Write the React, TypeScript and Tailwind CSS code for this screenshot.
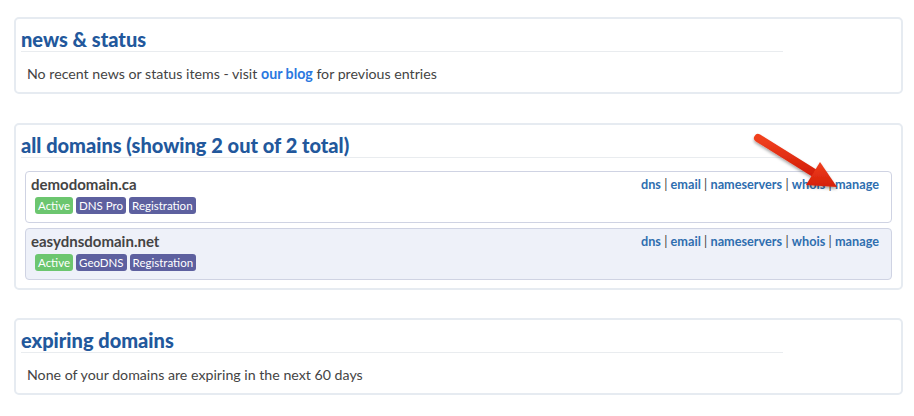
import React from "react";

const Badge = ({ children, green }: { children: React.ReactNode; green?: boolean }) => (
  <span
    className={
      "inline-block rounded-[3px] px-[3px] text-[11.5px] leading-[17px] text-white " +
      (green ? "bg-[#6cc66f]" : "bg-[#5d609f]")
    }
  >
    {children}
  </span>
);

const Links = () => {
  const items = ["dns", "email", "nameservers", "whois", "manage"];
  return (
    <div className="text-[12.7px] font-bold leading-[20px] text-[#2e6eaf]">
      {items.map((it, i) => (
        <React.Fragment key={it}>
          {i > 0 && <span className="font-normal text-[#444]"> | </span>}
          <a>{it}</a>
        </React.Fragment>
      ))}
    </div>
  );
};

const Row = ({ name, badges, alt }: { name: string; badges: string[]; alt?: boolean }) => (
  <div
    className={
      "mx-[4px] rounded-[4px] border border-[#cfd3e3] pl-[5px] pr-[12px] pt-[2px] pb-[8px] " +
      (alt ? "bg-[#eef1f9]" : "bg-white")
    }
  >
    <div className="flex items-start justify-between">
      <div className="text-[15px] font-bold leading-[20px] text-[#444]">{name}</div>
      <Links />
    </div>
    <div className="ml-[4px] mt-[3px] flex gap-[3px]">
      <Badge green>Active</Badge>
      {badges.map((b) => (
        <Badge key={b}>{b}</Badge>
      ))}
    </div>
  </div>
);

const Panel = ({ title, children, pb }: { title: string; children: React.ReactNode; pb: string }) => (
  <div className={"rounded-[5px] border-2 border-[#e6ebf1] bg-white px-[5px] pt-[8px] " + pb}>
    <h2 className="w-[762px] border-b border-[#e9ecef] text-[20px] font-black leading-[24px] text-[#22589c]">
      {title}
    </h2>
    {children}
  </div>
);

export default function App() {
  return (
    <div
      className="relative min-h-[416px] bg-white pl-[14px] pr-[11px] pt-[17px]"
      style={{ fontFamily: "Lato, 'Open Sans', sans-serif" }}
    >
      <Panel title="news & status" pb="pb-[8px]">
        <p className="mt-[12px] pl-[6px] text-[14.2px] leading-[20px] text-[#444]">
          No recent news or status items - visit{" "}
          <a className="font-bold text-[#2a78e0]">our blog</a> for previous entries
        </p>
      </Panel>

      <div className="mt-[29px]">
        <Panel title="all domains (showing 2 out of 2 total)" pb="pb-[8px]">
          <div className="mt-[13px] flex flex-col gap-[5px]">
            <Row name="demodomain.ca" badges={["DNS Pro", "Registration"]} />
            <Row name="easydnsdomain.net" badges={["GeoDNS", "Registration"]} alt />
          </div>
        </Panel>
      </div>

      <div className="mt-[28px]">
        <Panel title="expiring domains" pb="pb-[8px]">
          <p className="mt-[12px] pl-[6px] text-[14.2px] leading-[20px] text-[#444]">
            None of your domains are expiring in the next 60 days
          </p>
        </Panel>
      </div>

      <svg
        className="absolute left-[745px] top-[128px]"
        width="110"
        height="75"
        viewBox="0 0 110 75"
      >
        <defs>
          <linearGradient id="ar" x1="0" y1="0" x2="0" y2="1">
            <stop offset="0" stopColor="#f0401f" />
            <stop offset="1" stopColor="#d41f08" />
          </linearGradient>
          <filter id="sh" x="-20%" y="-20%" width="140%" height="160%">
            <feDropShadow dx="0" dy="2" stdDeviation="1.5" floodColor="#000" floodOpacity="0.35" />
          </filter>
        </defs>
        <g filter="url(#sh)">
          <line x1="13" y1="10" x2="70" y2="45.5" stroke="url(#ar)" strokeWidth="8" strokeLinecap="round" />
          <polygon points="92,59 61,57 75,34" fill="url(#ar)" />
        </g>
      </svg>
    </div>
  );
}
